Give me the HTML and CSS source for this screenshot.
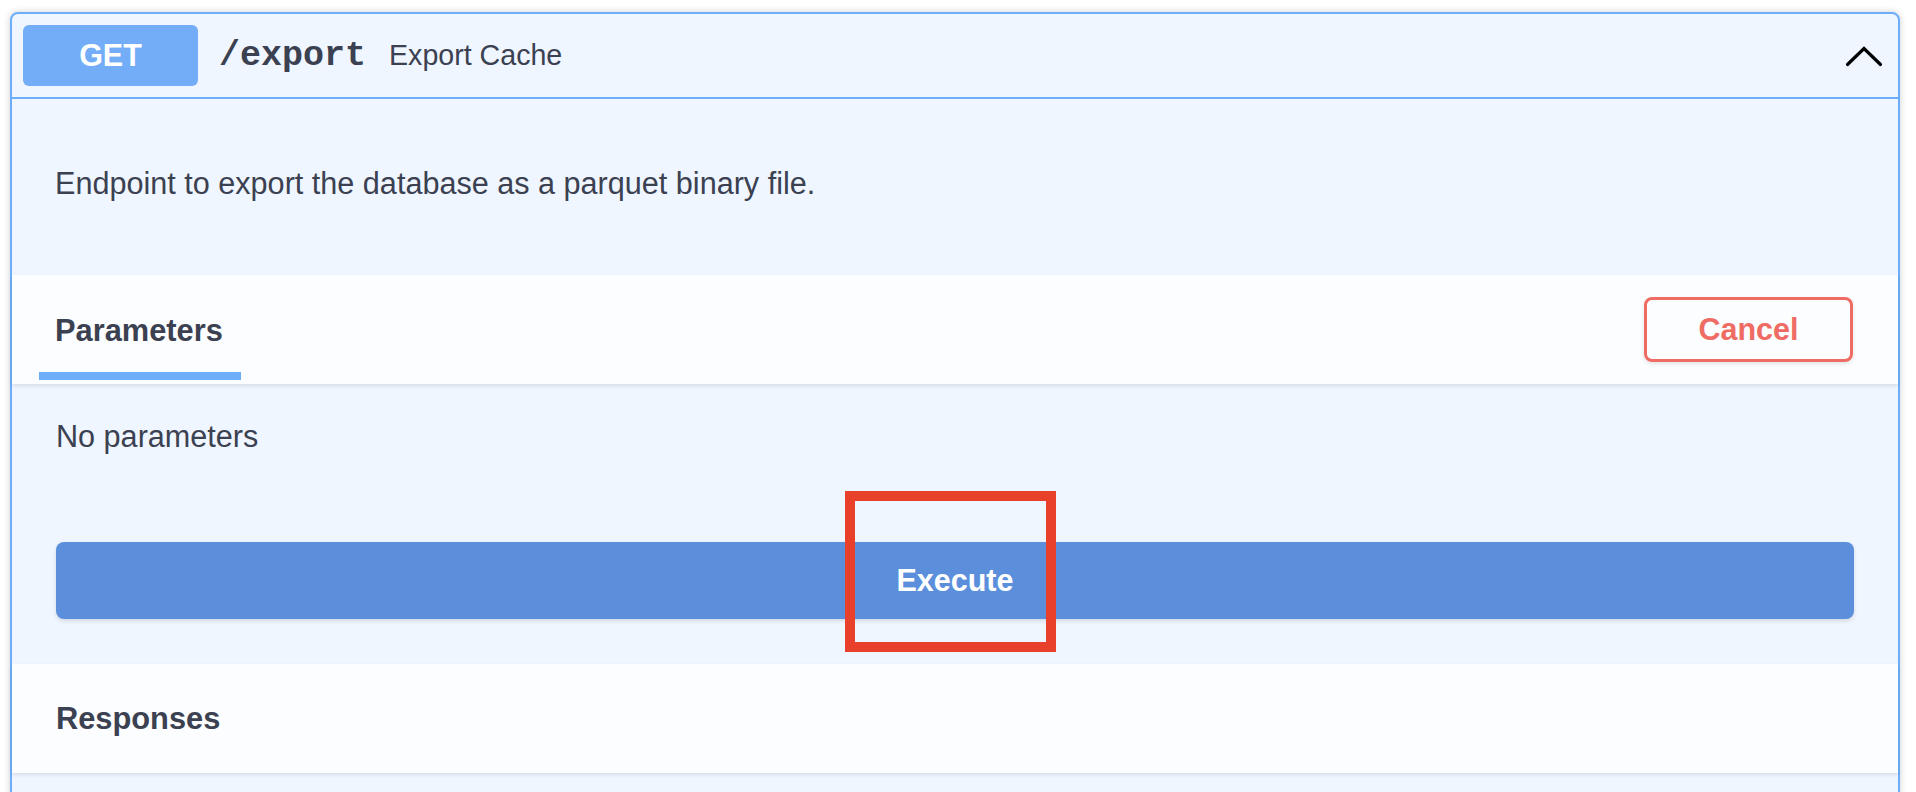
FILE: index.html
```html
<!DOCTYPE html>
<html lang="en">
<head>
<meta charset="utf-8">
<title>GET /export</title>
<link rel="stylesheet" href="styles.css">
</head>
<body>
<div class="opblock">
  <div class="summary">
    <span class="method">GET</span>
    <span class="path">/export</span>
    <span class="summary-desc">Export Cache</span>
    <svg class="arrow" width="38" height="21" viewBox="0 0 38 21" aria-hidden="true">
      <path d="M2.5 18.5 L19 2.5 L35.5 18.5" fill="none" stroke="#000" stroke-width="3.2" stroke-linecap="round" stroke-linejoin="miter"/>
    </svg>
  </div>
  <div class="description">
    <p>Endpoint to export the database as a parquet binary file.</p>
  </div>
  <div class="section-header">
    <div class="tab"><h4>Parameters</h4></div>
    <button class="btn-cancel">Cancel</button>
  </div>
  <div class="params-body">
    <p class="no-params">No parameters</p>
    <button class="btn-execute">Execute</button>
  </div>
  <div class="responses-header">
    <h4>Responses</h4>
  </div>
  <div class="tail"></div>
</div>
<div class="highlight"></div>
</body>
</html>
```

FILE: styles.css
```css
html, body {
  margin: 0;
  background: #ffffff;
}

body {
  padding: 12px 16px 0 10px;
  font-family: "Liberation Sans", Arial, Helvetica, sans-serif;
  color: #3b4151;
  overflow: hidden;
  height: 792px;
  box-sizing: border-box;
  position: relative;
}

.opblock {
  border: 2px solid #6caefa;
  border-radius: 8px;
  background: #eff6ff;
  box-shadow: 0 0 7px rgba(0, 0, 0, 0.19);
}

.summary {
  display: flex;
  align-items: center;
  height: 83px;
  padding: 0 15px 0 11px;
  border-bottom: 2px solid #6caefa;
}

.method {
  display: flex;
  align-items: center;
  justify-content: center;
  width: 175px;
  height: 61px;
  border-radius: 6px;
  background: #73adf7;
  color: #ffffff;
  font-weight: 700;
  font-size: 30.5px;
}

.path {
  margin-left: 21px;
  font-family: "Liberation Mono", "Courier New", monospace;
  font-weight: 700;
  font-size: 35px;
  color: #3b4151;
}

.summary-desc {
  margin-left: 23px;
  font-size: 28.6px;
  color: #3b4151;
}

.arrow {
  margin-left: auto;
  margin-top: 2px;
}

.description {
  padding: 64px 44px 72px 43px;
}

.description p {
  margin: 0;
  font-size: 30.6px;
  line-height: 40px;
}

.section-header {
  position: relative;
  display: flex;
  align-items: center;
  justify-content: space-between;
  height: 109px;
  box-sizing: border-box;
  padding: 0 45px 0 27px;
  background: #fcfdff;
  box-shadow: 0 2px 4px rgba(0, 0, 0, 0.1);
}

.tab {
  align-self: flex-start;
  padding: 36px 18px 21px 16px;
  border-bottom: 8px solid #6caefa;
}

.tab h4,
.responses-header h4 {
  margin: 0;
  font-size: 30.8px;
  line-height: 40px;
  font-weight: 700;
  color: #3b4151;
}

.btn-cancel {
  width: 209px;
  height: 65px;
  box-sizing: border-box;
  border: 3px solid #ef6c64;
  border-radius: 8px;
  background: transparent;
  color: #ef6c64;
  font-family: inherit;
  font-weight: 700;
  font-size: 30.5px;
  box-shadow: 0 2px 4px rgba(0, 0, 0, 0.1);
}

.params-body {
  padding: 32px 44px 45px 44px;
}

.no-params {
  margin: 0;
  font-size: 30.6px;
  line-height: 40px;
}

.btn-execute {
  display: block;
  width: 100%;
  height: 77px;
  margin-top: 86px;
  border: none;
  border-radius: 8px;
  background: #5b8fdc;
  color: #ffffff;
  font-family: inherit;
  font-weight: 700;
  font-size: 30.5px;
  box-shadow: 0 2px 4px rgba(0, 0, 0, 0.12);
}

.responses-header {
  position: relative;
  height: 109px;
  box-sizing: border-box;
  padding: 35px 44px 34px 44px;
  background: #fcfdff;
  box-shadow: 0 2px 4px rgba(0, 0, 0, 0.1);
}

.tail {
  height: 60px;
}

.highlight {
  position: absolute;
  left: 845px;
  top: 491px;
  width: 211px;
  height: 161px;
  box-sizing: border-box;
  border: 10px solid #e8402a;
}
```
